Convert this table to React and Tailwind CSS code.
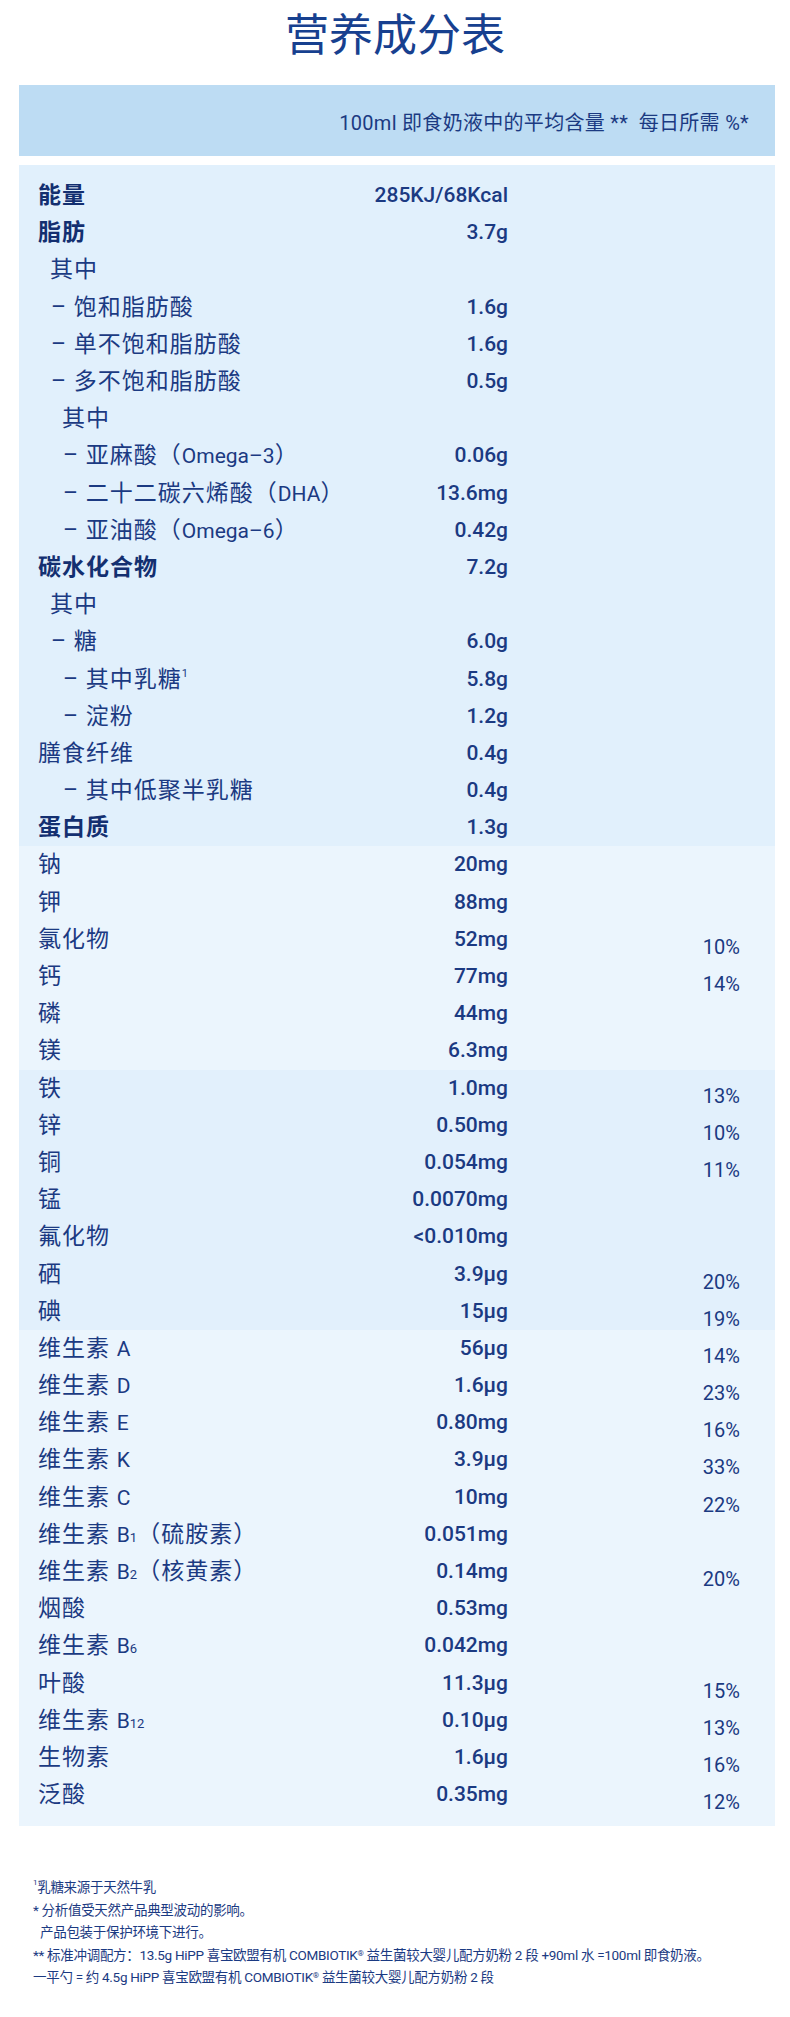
import React from "react";

const L = ({ children }) => <span className="text-[21px] tracking-normal">{children}</span>;
const Sub = ({ children }) => <span className="text-[13px] tracking-normal">{children}</span>;

const indentCls = {
  0: "pl-0",
  1: "pl-[12px]",
  2: "pl-[13px]",
  3: "pl-[24px]",
  4: "pl-[25px]",
};

const sections = [
  {
    bg: "bg-[#e1f0fc]",
    pad: "pt-[12px]",
    rows: [
      { label: "能量", value: "285KJ/68Kcal", bold: true },
      { label: "脂肪", value: "3.7g", bold: true },
      { label: "其中", indent: 1 },
      { label: "– 饱和脂肪酸", value: "1.6g", indent: 2 },
      { label: "– 单不饱和脂肪酸", value: "1.6g", indent: 2 },
      { label: "– 多不饱和脂肪酸", value: "0.5g", indent: 2 },
      { label: "其中", indent: 3 },
      { label: <>– 亚麻酸（<L>Omega–3</L>）</>, value: "0.06g", indent: 4 },
      { label: <>– 二十二碳六烯酸（<L>DHA</L>）</>, value: "13.6mg", indent: 4 },
      { label: <>– 亚油酸（<L>Omega–6</L>）</>, value: "0.42g", indent: 4 },
      { label: "碳水化合物", value: "7.2g", bold: true },
      { label: "其中", indent: 1 },
      { label: "– 糖", value: "6.0g", indent: 2 },
      {
        label: (
          <>
            – 其中乳糖<sup className="text-[11px] top-[-0.9em]">1</sup>
          </>
        ),
        value: "5.8g",
        indent: 4,
      },
      { label: "– 淀粉", value: "1.2g", indent: 4 },
      { label: "膳食纤维", value: "0.4g" },
      { label: "– 其中低聚半乳糖", value: "0.4g", indent: 4 },
      { label: "蛋白质", value: "1.3g", bold: true },
    ],
  },
  {
    bg: "bg-[#ebf5fd]",
    pad: "",
    rows: [
      { label: "钠", value: "20mg" },
      { label: "钾", value: "88mg" },
      { label: "氯化物", value: "52mg", pct: "10%" },
      { label: "钙", value: "77mg", pct: "14%" },
      { label: "磷", value: "44mg" },
      { label: "镁", value: "6.3mg" },
    ],
  },
  {
    bg: "bg-[#e2f0fc]",
    pad: "",
    rows: [
      { label: "铁", value: "1.0mg", pct: "13%" },
      { label: "锌", value: "0.50mg", pct: "10%" },
      { label: "铜", value: "0.054mg", pct: "11%" },
      { label: "锰", value: "0.0070mg" },
      { label: "氟化物", value: "<0.010mg" },
      { label: "硒", value: "3.9µg", pct: "20%" },
      { label: "碘", value: "15µg", pct: "19%" },
    ],
  },
  {
    bg: "bg-[#ebf5fd]",
    pad: "pb-[13px]",
    rows: [
      { label: <>维生素 <L>A</L></>, value: "56µg", pct: "14%" },
      { label: <>维生素 <L>D</L></>, value: "1.6µg", pct: "23%" },
      { label: <>维生素 <L>E</L></>, value: "0.80mg", pct: "16%" },
      { label: <>维生素 <L>K</L></>, value: "3.9µg", pct: "33%" },
      { label: <>维生素 <L>C</L></>, value: "10mg", pct: "22%" },
      { label: <>维生素 <L>B</L><Sub>1</Sub>（硫胺素）</>, value: "0.051mg" },
      { label: <>维生素 <L>B</L><Sub>2</Sub>（核黄素）</>, value: "0.14mg", pct: "20%" },
      { label: "烟酸", value: "0.53mg" },
      { label: <>维生素 <L>B</L><Sub>6</Sub></>, value: "0.042mg" },
      { label: "叶酸", value: "11.3µg", pct: "15%" },
      { label: <>维生素 <L>B</L><Sub>12</Sub></>, value: "0.10µg", pct: "13%" },
      { label: "生物素", value: "1.6µg", pct: "16%" },
      { label: "泛酸", value: "0.35mg", pct: "12%" },
    ],
  },
];

function Row({ r }) {
  return (
    <div className="flex h-[37.2px] items-center pl-[19px]">
      <div
        className={`w-[310px] shrink-0 whitespace-nowrap text-[23px] leading-none tracking-[1px] ${
          indentCls[r.indent || 0]
        } ${r.bold ? "font-bold text-[#132f70]" : "font-normal"}`}
      >
        {r.label}
      </div>
      <div className="w-[160px] shrink-0 text-right text-[21px] font-medium leading-none">
        {r.value || ""}
      </div>
      <div className="mt-[15px] w-[232px] shrink-0 text-right text-[20px] leading-none">
        {r.pct || ""}
      </div>
    </div>
  );
}

export default function App() {
  return (
    <div className="min-h-[2017px] w-[790px] bg-white font-['Roboto','Noto_Sans_CJK_SC',sans-serif] text-[#1b3a82]">
      <div className="h-[85px] pt-[14px] text-center text-[44px] leading-[44px] text-[#17408f]">
        营养成分表
      </div>
      <div className="ml-[19px] flex h-[71px] w-[756px] items-center justify-end bg-[#bddcf3] pr-[26px] pt-[5px]">
        <span className="whitespace-pre text-[20px] leading-none tracking-[0.3px]">
          100ml 即食奶液中的平均含量 **  每日所需 %*
        </span>
      </div>
      <div className="ml-[19px] mt-[9px] w-[756px]">
        {sections.map((s, i) => (
          <div key={i} className={`${s.bg} ${s.pad}`}>
            {s.rows.map((r, j) => (
              <Row key={j} r={r} />
            ))}
          </div>
        ))}
      </div>
      <div className="ml-[33px] mt-[50px] text-[13.5px] leading-[22.5px] tracking-[-0.3px]">
        <div>
          <sup className="text-[8px] top-[-0.9em]">1</sup>乳糖来源于天然牛乳
        </div>
        <div>* 分析值受天然产品典型波动的影响。</div>
        <div className="pl-[7px]">产品包装于保护环境下进行。</div>
        <div>
          ** 标准冲调配方：13.5g HiPP 喜宝欧盟有机 COMBIOTIK<sup className="text-[8px]">®</sup> 益生菌较大婴儿配方奶粉 2 段 +90ml 水 =100ml 即食奶液。
        </div>
        <div>
          一平勺 = 约 4.5g HiPP 喜宝欧盟有机 COMBIOTIK<sup className="text-[8px]">®</sup> 益生菌较大婴儿配方奶粉 2 段
        </div>
      </div>
    </div>
  );
}
